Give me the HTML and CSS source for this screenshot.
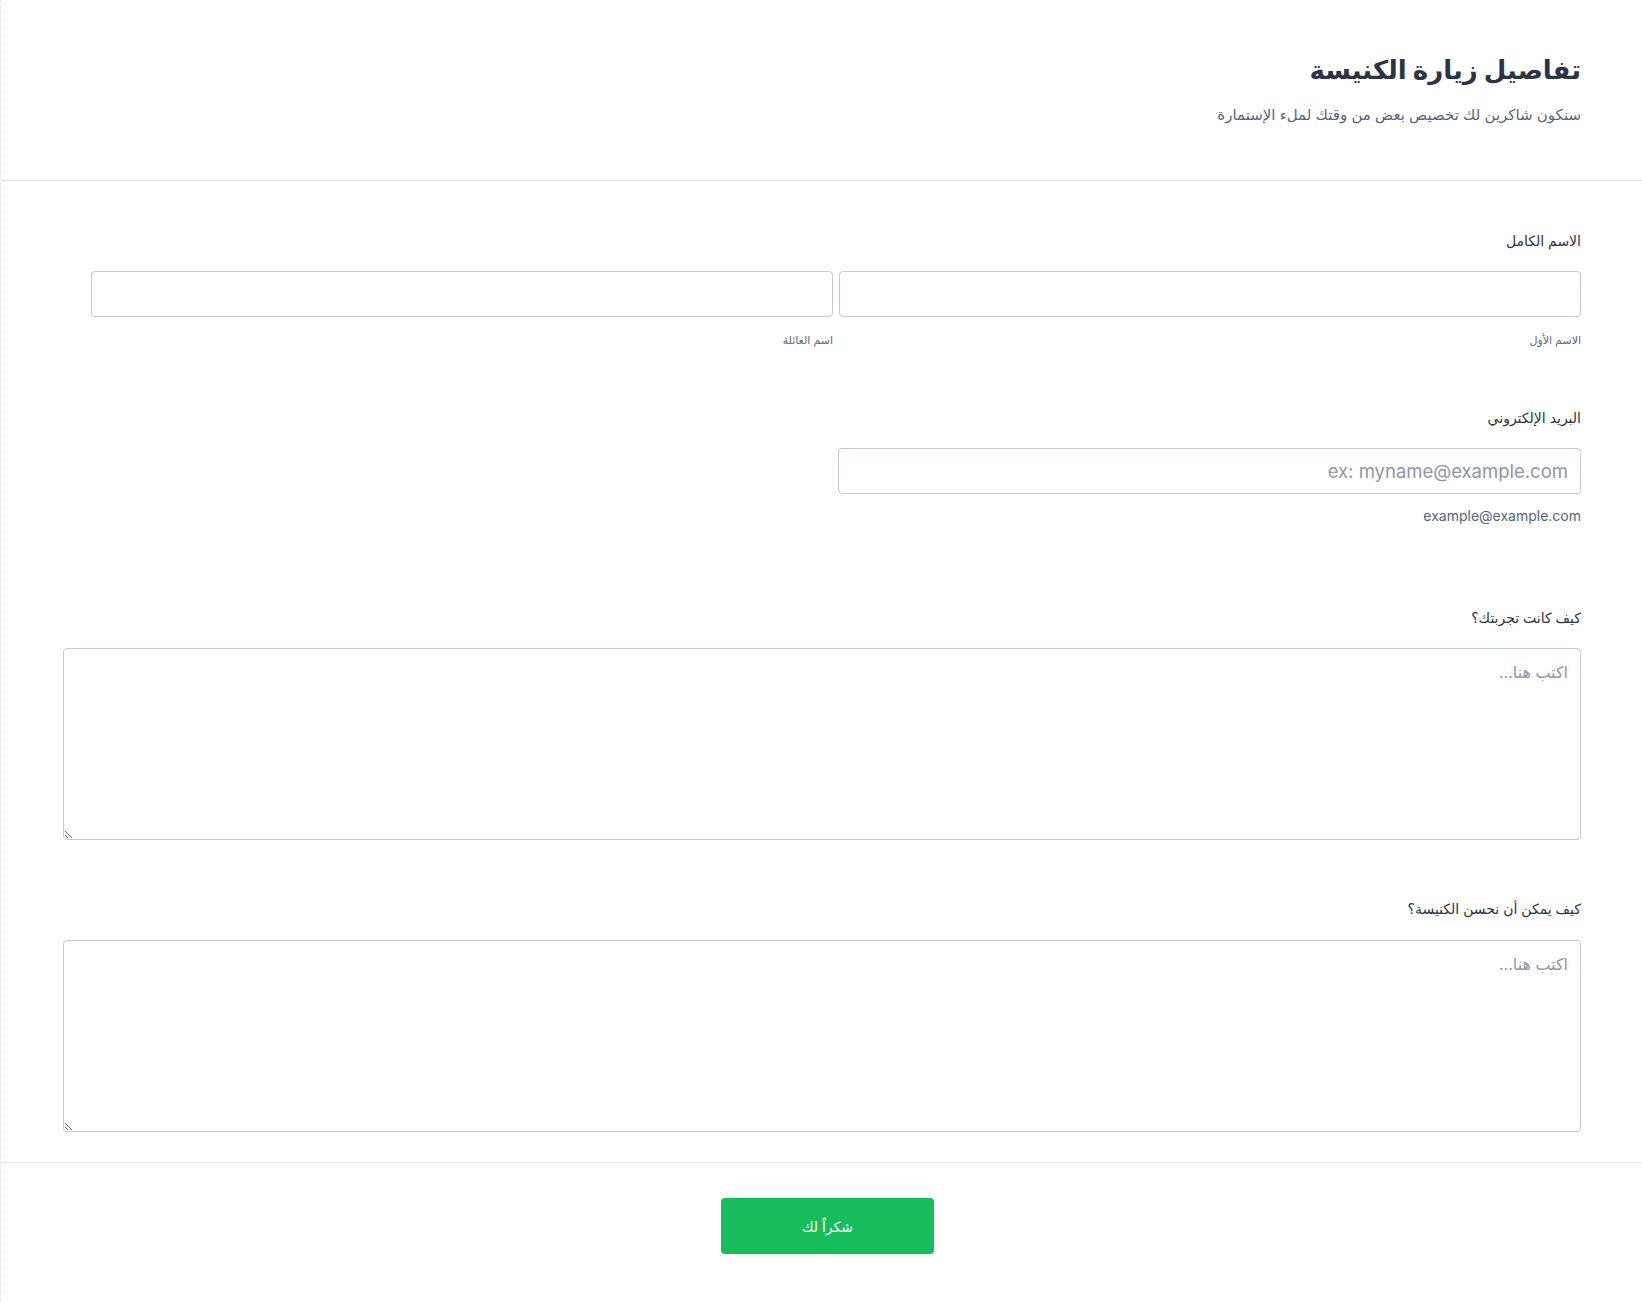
FILE: index.html
```html
<!DOCTYPE html>
<html lang="ar" dir="rtl">
<head>
<meta charset="utf-8">
<title>تفاصيل زيارة الكنيسة</title>
<link rel="stylesheet" href="styles.css">
</head>
<body>
<div class="form">
  <header class="head">
    <h1 class="title">تفاصيل زيارة الكنيسة</h1>
    <p class="subtitle">سنكون شاكرين لك تخصيص بعض من وقتك لملء الإستمارة</p>
  </header>
  <main class="fields">
    <section class="field field-name">
      <label class="label">الاسم الكامل</label>
      <div class="name-row">
        <div class="name-col">
          <input class="input" type="text">
          <span class="sublabel">الاسم الأول</span>
        </div>
        <div class="name-col">
          <input class="input" type="text">
          <span class="sublabel">اسم العائلة</span>
        </div>
      </div>
    </section>
    <section class="field field-email">
      <label class="label">البريد الإلكتروني</label>
      <input class="input input-email" type="email" placeholder="ex: myname@example.com">
      <span class="sublabel sublabel-email">example@example.com</span>
    </section>
    <section class="field field-q1">
      <label class="label">كيف كانت تجربتك؟</label>
      <textarea class="area" placeholder="اكتب هنا..."></textarea>
    </section>
    <section class="field field-q2">
      <label class="label">كيف يمكن أن نحسن الكنيسة؟</label>
      <textarea class="area" placeholder="اكتب هنا..."></textarea>
    </section>
  </main>
  <footer class="foot">
    <button class="submit" type="button">شكراً لك</button>
  </footer>
</div>
</body>
</html>
```
FILE: styles.css
```css
html, body {
  margin: 0;
  padding: 0;
  background: #ffffff;
}
body {
  font-family: Inter, "DejaVu Sans", sans-serif;
  color: #2c3345;
}
.form {
  min-height: 1302px;
  box-sizing: border-box;
  border-left: 1px dotted #dfe1ea;
}
.head {
  padding: 52px 61px 55px 62px;
  border-bottom: 1px solid #dcdfe8;
}
.title {
  margin: 0;
  font-size: 26px;
  line-height: 36px;
  font-weight: 700;
  color: #2c3345;
}
.subtitle {
  margin: 17px 0 0;
  font-size: 15px;
  line-height: 20px;
  color: #57647e;
}
.fields {
  padding: 50px 61px 30px 62px;
  border-bottom: 1px solid #e3e5ec;
}
.field {
  display: flex;
  flex-direction: column;
  align-items: stretch;
}
.label {
  display: block;
  font-size: 14px;
  line-height: 20px;
  color: #2c3345;
  margin-bottom: 20px;
}
.name-row {
  display: flex;
  gap: 6px;
  padding-left: 28px;
}
.name-col {
  flex: 1;
  display: flex;
  flex-direction: column;
}
.input {
  box-sizing: border-box;
  height: 46px;
  border: 1px solid #c3c8d6;
  border-radius: 4px;
  background: #fff;
  font-family: Inter, "DejaVu Sans", sans-serif;
  font-size: 18.5px;
  color: #2c3345;
  padding: 0 12px;
  outline: none;
}
.input::placeholder {
  color: #8f96a8;
}
.sublabel {
  display: block;
  margin-top: 15px;
  font-size: 11px;
  line-height: 16px;
  color: #57647e;
}
.field-email {
  margin-top: 60px;
}
.input-email {
  width: 743px;
}
.sublabel-email {
  margin-top: 13px;
  font-size: 14px;
  line-height: 18px;
}
.field-q1 {
  margin-top: 83px;
}
.field-q2 {
  margin-top: 59px;
}
.field-q2 .label {
  margin-bottom: 21px;
}
.area {
  box-sizing: border-box;
  width: 100%;
  height: 192px;
  border: 1px solid #c3c8d6;
  border-radius: 4px;
  padding: 13px 12px;
  font-family: Inter, "DejaVu Sans", sans-serif;
  font-size: 16px;
  color: #2c3345;
  resize: vertical;
  outline: none;
}
.area::placeholder {
  color: #8f96a8;
}
.foot {
  display: flex;
  justify-content: center;
  padding: 35px 0 48px 12px;
}
.submit {
  width: 213px;
  height: 56px;
  border: 0;
  border-radius: 4px;
  background: #18bd5b;
  color: #ffffff;
  font-family: Inter, "DejaVu Sans", sans-serif;
  font-size: 14px;
  cursor: pointer;
}
```
